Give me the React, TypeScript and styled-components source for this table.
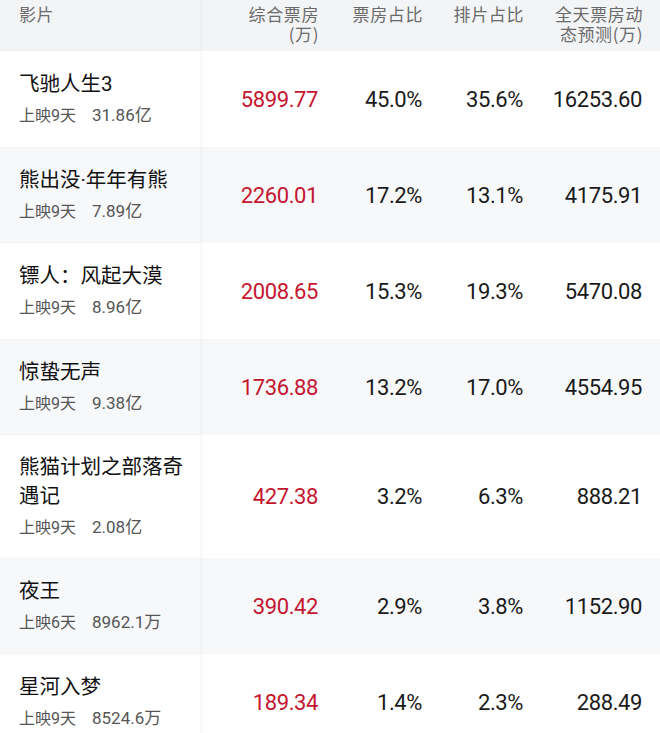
import styled, { createGlobalStyle } from "styled-components";

const GlobalStyle = createGlobalStyle`
  html, body {
    margin: 0;
    padding: 0;
    background: #ffffff;
  }
  body {
    font-family: Roboto, "Noto Sans CJK SC", sans-serif;
    color: #1a1a1a;
  }
`;

const Table = styled.div`
  width: 660px;
  display: flex;
  flex-direction: column;
`;

const Row = styled.div<{ $bg: string; $head?: boolean }>`
  display: grid;
  grid-template-columns: 200px 130px 104px 101px 119px;
  padding-right: 6px;
  min-height: ${(p) => (p.$head ? "51px" : "96px")};
  background: ${(p) => p.$bg};
  box-sizing: border-box;
`;

const HeadCell = styled.div<{ $left?: boolean }>`
  padding: 4px ${(p) => (p.$left ? "0" : "11px")} 7px ${(p) => (p.$left ? "19px" : "0")};
  font-family: "Noto Sans CJK SC", sans-serif;
  font-size: 17px;
  line-height: 20px;
  letter-spacing: 0.6px;
  color: #6b6b6b;
  text-align: ${(p) => (p.$left ? "left" : "right")};
  position: ${(p) => (p.$left ? "relative" : "static")};
  z-index: 1;
  box-shadow: ${(p) => (p.$left ? "2px 0 5px rgba(0, 0, 0, 0.035)" : "none")};
`;

const NameCell = styled.div`
  position: relative;
  z-index: 1;
  padding: 18px 12px 18px 19px;
  display: flex;
  flex-direction: column;
  justify-content: center;
  gap: 4px;
  box-shadow: 2px 0 5px rgba(0, 0, 0, 0.035);
`;

const Title = styled.div`
  font-family: Roboto, "Noto Sans CJK SC", sans-serif;
  font-size: 20.5px;
  font-weight: 400;
  line-height: 29px;
  color: #111111;
`;

const Sub = styled.div`
  font-size: 16px;
  line-height: 24px;
  color: #555555;
  font-family: Roboto, "Noto Sans CJK SC", sans-serif;
`;

const Amount = styled.span`
  margin-left: 16px;
  font-size: 17px;
`;

const NumCell = styled.div<{ $red?: boolean }>`
  display: flex;
  align-items: center;
  justify-content: flex-end;
  padding-right: 12px;
  font-family: Roboto, sans-serif;
  font-size: 22px;
  letter-spacing: -0.4px;
  color: ${(p) => (p.$red ? "#c4162f" : "#1a1a1a")};
`;

const movies = [
  { name: "飞驰人生3", days: "上映9天", total: "31.86亿", box: "5899.77", share: "45.0%", shows: "35.6%", fc: "16253.60" },
  { name: "熊出没·年年有熊", days: "上映9天", total: "7.89亿", box: "2260.01", share: "17.2%", shows: "13.1%", fc: "4175.91" },
  { name: "镖人：风起大漠", days: "上映9天", total: "8.96亿", box: "2008.65", share: "15.3%", shows: "19.3%", fc: "5470.08" },
  { name: "惊蛰无声", days: "上映9天", total: "9.38亿", box: "1736.88", share: "13.2%", shows: "17.0%", fc: "4554.95" },
  { name: "熊猫计划之部落奇遇记", days: "上映9天", total: "2.08亿", box: "427.38", share: "3.2%", shows: "6.3%", fc: "888.21" },
  { name: "夜王", days: "上映6天", total: "8962.1万", box: "390.42", share: "2.9%", shows: "3.8%", fc: "1152.90" },
  { name: "星河入梦", days: "上映9天", total: "8524.6万", box: "189.34", share: "1.4%", shows: "2.3%", fc: "288.49" },
];

export default function App() {
  return (
    <>
      <GlobalStyle />
      <Table>
        <Row $bg="#f3f4f6" $head>
          <HeadCell $left>影片</HeadCell>
          <HeadCell>
            综合票房
            <br />
            (万)
          </HeadCell>
          <HeadCell>票房占比</HeadCell>
          <HeadCell>排片占比</HeadCell>
          <HeadCell>
            全天票房动
            <br />
            态预测(万)
          </HeadCell>
        </Row>
        {movies.map((m, i) => (
          <Row key={m.name} $bg={i % 2 === 0 ? "#ffffff" : "#f7f8fa"}>
            <NameCell>
              <Title>{m.name}</Title>
              <Sub>
                {m.days}
                <Amount>{m.total}</Amount>
              </Sub>
            </NameCell>
            <NumCell $red>{m.box}</NumCell>
            <NumCell>{m.share}</NumCell>
            <NumCell>{m.shows}</NumCell>
            <NumCell>{m.fc}</NumCell>
          </Row>
        ))}
      </Table>
    </>
  );
}
